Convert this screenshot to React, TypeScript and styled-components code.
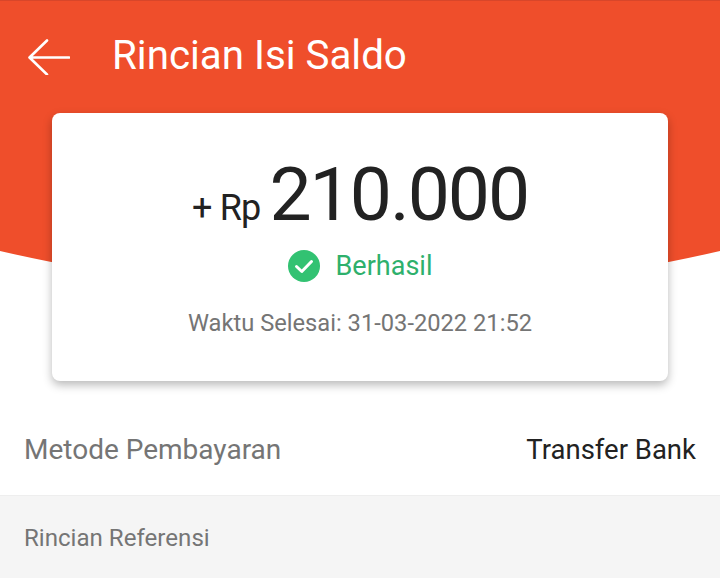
import styled, { createGlobalStyle } from "styled-components";

const GlobalStyle = createGlobalStyle`
  html, body {
    margin: 0;
    padding: 0;
    background: #fff;
    font-family: Roboto, "Liberation Sans", sans-serif;
  }
`;

const Page = styled.div`
  width: 720px;
  height: 579px;
  overflow: hidden;
  background: #fff;
`;

const Hero = styled.section`
  position: relative;
  isolation: isolate;
  border-top: 1px solid #d8462a;
  padding: 0 52px;
  &::before {
    content: "";
    position: absolute;
    z-index: -1;
    top: 0;
    left: 0;
    width: 720px;
    height: 291px;
    background: #ef4e2b;
    clip-path: circle(1601px at 360px -1310px);
  }
`;

const TopBar = styled.header`
  display: flex;
  align-items: center;
  gap: 42px;
  height: 112px;
  margin: 0 -52px;
  padding: 0 0 0 27px;
  box-sizing: border-box;
`;

const BackIcon = styled.svg`
  width: 43px;
  height: 36px;
  flex: none;
`;

const Title = styled.h1`
  margin: 0;
  padding-bottom: 3px;
  color: #fff;
  font-size: 40.3px;
  font-weight: 400;
  line-height: 44px;
`;

const Card = styled.div`
  display: flex;
  flex-direction: column;
  align-items: center;
  height: 268px;
  box-sizing: border-box;
  padding-top: 38px;
  background: #fff;
  border-radius: 8px;
  box-shadow: 0 4px 10px rgba(0, 0, 0, 0.28);
`;

const Amount = styled.div`
  display: flex;
  align-items: baseline;
  height: 88px;
  color: #222;
`;

const Prefix = styled.span`
  font-size: 36px;
  margin-right: 9px;
  letter-spacing: -0.8px;
`;

const Value = styled.span`
  font-size: 75px;
  line-height: 86px;
  letter-spacing: -2px;
`;

const Status = styled.div`
  display: flex;
  align-items: center;
  gap: 16px;
  margin-top: 10px;
  color: #2eb06c;
  font-size: 27px;
  line-height: 34px;
`;

const Note = styled.div`
  margin-top: 26px;
  color: #757575;
  font-size: 23.7px;
  line-height: 28px;
`;

const InfoRow = styled.div`
  display: flex;
  align-items: center;
  justify-content: space-between;
  height: 115px;
  box-sizing: border-box;
  padding: 22px 24px 0;
  border-bottom: 1px solid #eeeeee;
`;

const Label = styled.span`
  color: #757575;
  font-size: 28px;
`;

const Method = styled.span`
  color: #222;
  font-size: 27.5px;
`;

const SectionBar = styled.div`
  display: flex;
  align-items: center;
  height: 82px;
  box-sizing: border-box;
  padding: 2px 24px 0;
  background: #f5f5f5;
  color: #757575;
  font-size: 24.1px;
`;

export default function App() {
  return (
    <Page>
      <GlobalStyle />
      <Hero>
        <TopBar>
          <BackIcon viewBox="0 0 43 36" fill="none">
            <path
              d="M42 18.5H3M20 1.5L2.5 18.5L20 35.5"
              stroke="#fff"
              strokeWidth="2.6"
              strokeLinecap="round"
              strokeLinejoin="round"
            />
          </BackIcon>
          <Title>Rincian Isi Saldo</Title>
        </TopBar>
        <Card>
          <Amount>
            <Prefix>+ Rp</Prefix>
            <Value>210.000</Value>
          </Amount>
          <Status>
            <svg width="32" height="32" viewBox="0 0 32 32">
              <circle cx="16" cy="16" r="16" fill="#32c272" />
              <path
                d="M8.5 16.5L13.8 21.5L23.5 11.5"
                fill="none"
                stroke="#fff"
                strokeWidth="3"
                strokeLinecap="round"
                strokeLinejoin="round"
              />
            </svg>
            Berhasil
          </Status>
          <Note>Waktu Selesai: 31-03-2022 21:52</Note>
        </Card>
      </Hero>
      <InfoRow>
        <Label>Metode Pembayaran</Label>
        <Method>Transfer Bank</Method>
      </InfoRow>
      <SectionBar>Rincian Referensi</SectionBar>
    </Page>
  );
}
